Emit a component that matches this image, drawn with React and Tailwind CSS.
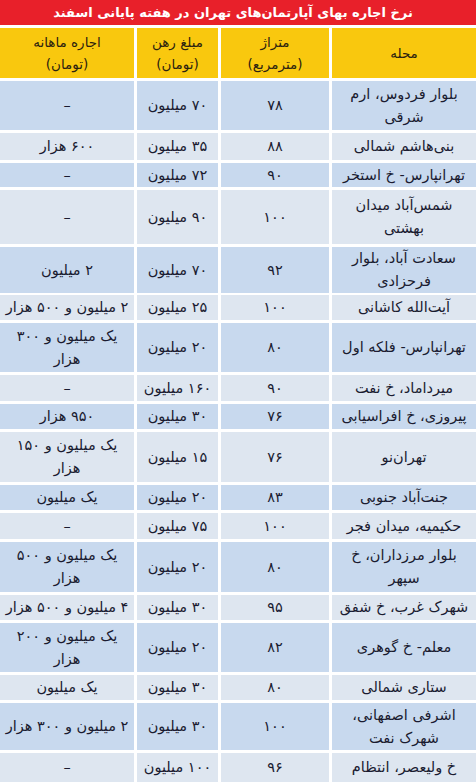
import React from "react";

const rows = [
  { area: ["بلوار فردوس، ارم", "شرقی"], size: "۷۸", deposit: "۷۰ میلیون", rent: ["–"], h: "h-[49px]" },
  { area: ["بنی‌هاشم شمالی"], size: "۸۸", deposit: "۳۵ میلیون", rent: ["۶۰۰ هزار"], h: "h-[27px]" },
  { area: ["تهرانپارس- خ استخر"], size: "۹۰", deposit: "۷۲ میلیون", rent: ["–"], h: "h-[24px]" },
  { area: ["شمس‌آباد میدان", "بهشتی"], size: "۱۰۰", deposit: "۹۰ میلیون", rent: ["–"], h: "h-[54px]" },
  { area: ["سعادت آباد، بلوار", "فرحزادی"], size: "۹۲", deposit: "۷۰ میلیون", rent: ["۲ میلیون"], h: "h-[45px]" },
  { area: ["آیت‌الله کاشانی"], size: "۱۰۰", deposit: "۲۵ میلیون", rent: ["۲ میلیون و ۵۰۰ هزار"], h: "h-[25px]" },
  { area: ["تهرانپارس- فلکه اول"], size: "۸۰", deposit: "۲۰ میلیون", rent: ["یک میلیون و ۳۰۰", "هزار"], h: "h-[49px]" },
  { area: ["میرداماد، خ نفت"], size: "۹۰", deposit: "۱۶۰ میلیون", rent: ["–"], h: "h-[26px]" },
  { area: ["پیروزی، خ افراسیابی"], size: "۷۶", deposit: "۳۰ میلیون", rent: ["۹۵۰ هزار"], h: "h-[25px]" },
  { area: ["تهران‌نو"], size: "۷۶", deposit: "۱۵ میلیون", rent: ["یک میلیون و ۱۵۰", "هزار"], h: "h-[50px]" },
  { area: ["جنت‌آباد جنوبی"], size: "۸۳", deposit: "۲۰ میلیون", rent: ["یک میلیون"], h: "h-[25px]" },
  { area: ["حکیمیه، میدان فجر"], size: "۱۰۰", deposit: "۷۵ میلیون", rent: ["–"], h: "h-[26px]" },
  { area: ["بلوار مرزداران، خ", "سپهر"], size: "۸۰", deposit: "۲۰ میلیون", rent: ["یک میلیون و ۵۰۰", "هزار"], h: "h-[50px]" },
  { area: ["شهرک غرب، خ شفق"], size: "۹۵", deposit: "۳۰ میلیون", rent: ["۴ میلیون و ۵۰۰ هزار"], h: "h-[25px]" },
  { area: ["معلم- خ گوهری"], size: "۸۲", deposit: "۲۰ میلیون", rent: ["یک میلیون و ۲۰۰", "هزار"], h: "h-[49px]" },
  { area: ["ستاری شمالی"], size: "۸۰", deposit: "۳۰ میلیون", rent: ["یک میلیون"], h: "h-[25px]" },
  { area: ["اشرفی اصفهانی،", "شهرک نفت"], size: "۱۰۰", deposit: "۳۰ میلیون", rent: ["۲ میلیون و ۳۰۰ هزار"], h: "h-[47px]" },
  { area: ["خ ولیعصر، انتظام"], size: "۹۶", deposit: "۱۰۰ میلیون", rent: ["–"], h: "h-[29px]" },
];

const Lines = ({ lines }) => (
  <>
    {lines.map((l, i) => (
      <span key={i} className="block whitespace-nowrap">{l}</span>
    ))}
  </>
);

const App = () => {
  return (
    <div
      dir="rtl"
      className="w-[476px] h-[782px] overflow-hidden bg-white flex flex-col gap-[3px] text-[#1a1b30]"
      style={{ fontFamily: '"DejaVu Sans", sans-serif' }}
    >
      <div className="h-[25px] shrink-0 bg-[#e8202a] flex items-center justify-center pr-[10px] text-white font-bold text-[13px] whitespace-nowrap">
        نرخ اجاره بهای آپارتمان‌های تهران در هفته پایانی اسفند
      </div>

      <div className="h-[50px] shrink-0 grid grid-cols-[144px_108px_81px_134px] gap-x-[3px] text-[13.5px] leading-[22px] text-[#2b2210]">
        <div className="bg-[#f9c80e] flex items-center justify-center">محله</div>
        <div className="bg-[#f9c80e] flex flex-col items-center justify-center">
          <Lines lines={["متراژ", "(مترمربع)"]} />
        </div>
        <div className="bg-[#f9c80e] flex flex-col items-center justify-center">
          <Lines lines={["مبلغ رهن", "(تومان)"]} />
        </div>
        <div className="bg-[#f9c80e] flex flex-col items-center justify-center">
          <Lines lines={["اجاره ماهانه", "(تومان)"]} />
        </div>
      </div>

      {rows.map((r, i) => {
        const bg = i % 2 === 0 ? "bg-[#c8d9ee]" : "bg-[#dee6f0]";
        return (
          <div
            key={i}
            className={`${r.h} shrink-0 grid grid-cols-[144px_108px_81px_134px] gap-x-[3px] text-[14.5px] leading-[23px]`}
          >
            <div className={`${bg} flex flex-col items-center justify-center text-center`}>
              <Lines lines={r.area} />
            </div>
            <div className={`${bg} flex items-center justify-center`}>{r.size}</div>
            <div className={`${bg} flex items-center justify-center whitespace-nowrap`}>{r.deposit}</div>
            <div className={`${bg} flex flex-col items-center justify-center text-center`}>
              <Lines lines={r.rent} />
            </div>
          </div>
        );
      })}
    </div>
  );
};

export default App;
